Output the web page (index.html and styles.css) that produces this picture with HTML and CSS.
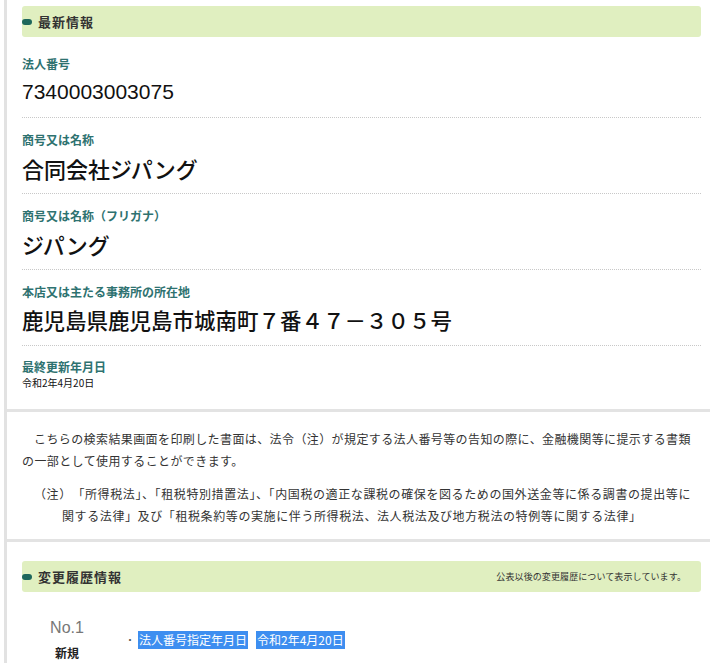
FILE: index.html
```html
<!DOCTYPE html>
<html lang="ja">
<head>
<meta charset="utf-8">
<title>法人番号</title>
<link rel="stylesheet" href="styles.css">
</head>
<body>
<div class="page">
  <section class="latest">
    <h2 class="bar"><span class="dot"></span><span class="bar-title">最新情報</span></h2>
    <dl class="info">
      <div class="item first">
        <dt class="label">法人番号</dt>
        <dd class="value num">7340003003075</dd>
      </div>
      <div class="item">
        <dt class="label">商号又は名称</dt>
        <dd class="value">合同会社ジパング</dd>
      </div>
      <div class="item">
        <dt class="label">商号又は名称（フリガナ）</dt>
        <dd class="value">ジパング</dd>
      </div>
      <div class="item">
        <dt class="label">本店又は主たる事務所の所在地</dt>
        <dd class="value address">鹿児島県鹿児島市城南町７番４７－３０５号</dd>
      </div>
      <div class="item last">
        <dt class="label">最終更新年月日</dt>
        <dd class="value small">令和2年4月20日</dd>
      </div>
    </dl>
  </section>

  <section class="notice">
    <p class="lead">こちらの検索結果画面を印刷した書面は、法令（注）が規定する法人番号等の告知の際に、金融機関等に提示する書類の一部として使用することができます。</p>
    <p class="note">（注）　「所得税法」、「租税特別措置法」、「内国税の適正な課税の確保を図るための国外送金等に係る調書の提出等に関する法律」及び「租税条約等の実施に伴う所得税法、法人税法及び地方税法の特例等に関する法律」</p>
  </section>

  <section class="history">
    <h2 class="bar"><span class="dot"></span><span class="bar-title">変更履歴情報</span><span class="bar-note">公表以後の変更履歴について表示しています。</span></h2>
    <div class="record">
      <div class="record-head">
        <div class="record-no">No.1</div>
        <div class="record-kind">新規</div>
      </div>
      <ul class="record-list">
        <li class="record-item"><span class="mark">・</span><span class="sel">法人番号指定年月日</span><span class="sel">令和2年4月20日</span></li>
      </ul>
    </div>
  </section>
</div>
</body>
</html>
```
FILE: styles.css
```css
* { box-sizing: border-box; }
html, body { margin: 0; padding: 0; background: #fff; }
body {
  font-family: "Noto Sans CJK JP", sans-serif;
  color: #222;
  width: 710px;
  height: 663px;
  overflow: hidden;
}
.page {
  margin-left: 4px;
  border-left: 3px solid #e2e2e2;
  min-height: 663px;
}
.bar {
  margin: 0;
  height: 31px;
  background: #e0efc0;
  border-radius: 3px;
  display: flex;
  align-items: center;
  font-size: 13px;
  font-weight: bold;
  color: #333;
  line-height: 1;
}
.dot {
  width: 10px;
  height: 6px;
  border-radius: 3px;
  background: #1e675c;
  margin-right: 6px;
  flex: none;
}
.bar-title { letter-spacing: 1px; }
.bar-note {
  margin-left: auto;
  margin-right: 15px;
  font-size: 9px;
  font-weight: normal;
  color: #333;
  letter-spacing: 0.1px;
}

.latest {
  padding: 6px 9px 0 15px;
  border-bottom: 3px solid #e3e3e3;
}
.info { margin: 5px 0 0; }
.item {
  padding: 14px 0 9px;
  border-bottom: 1px dotted #c8c8c8;
}
.item.last { border-bottom: none; padding-top: 13px; padding-bottom: 19px; }
.label {
  font-size: 12px;
  line-height: 16px;
  font-weight: bold;
  color: #2e7270;
}
.value {
  margin: 4px 0 0;
  font-size: 22px;
  line-height: 32px;
  font-weight: 500;
  color: #111;
}
.value.num {
  font-family: "Liberation Sans", Arial, sans-serif;
  font-size: 21px;
  font-weight: normal;
}
.value.address { font-size: 21.5px; }
.value.small {
  margin-top: 1px;
  font-size: 10px;
  line-height: 14px;
  font-weight: normal;
}

.notice {
  padding: 16px 18px 12px 15px;
  border-bottom: 3px solid #e3e3e3;
  font-size: 12px;
  line-height: 22px;
  color: #333;
}
.notice p { margin: 0; }
.lead {
  text-indent: 12px;
  letter-spacing: 0.4px;
}
.note {
  margin-top: 11px !important;
  padding-left: 40px;
  text-indent: -28px;
  letter-spacing: 0.6px;
}

.history {
  padding: 19px 9px 0 15px;
}
.record {
  display: flex;
  align-items: flex-start;
  margin-top: 26px;
}
.record-head {
  width: 60px;
  margin-left: 15px;
  text-align: center;
}
.record-no {
  font-family: "Liberation Sans", Arial, sans-serif;
  font-size: 16px;
  line-height: 20px;
  color: #777;
}
.record-kind {
  margin-top: 7px;
  font-size: 12px;
  line-height: 16px;
  font-weight: bold;
  color: #222;
}
.record-list {
  list-style: none;
  margin: 13px 0 0 28px;
  padding: 0;
}
.record-item {
  display: flex;
  align-items: center;
  font-size: 12px;
  line-height: 18px;
}
.mark {
  width: 13px;
  color: #555;
  font-size: 10px;
}
.sel {
  background: #3d8ef0;
  color: #fff;
  margin-right: 8px;
  padding: 0 1px;
}
```
